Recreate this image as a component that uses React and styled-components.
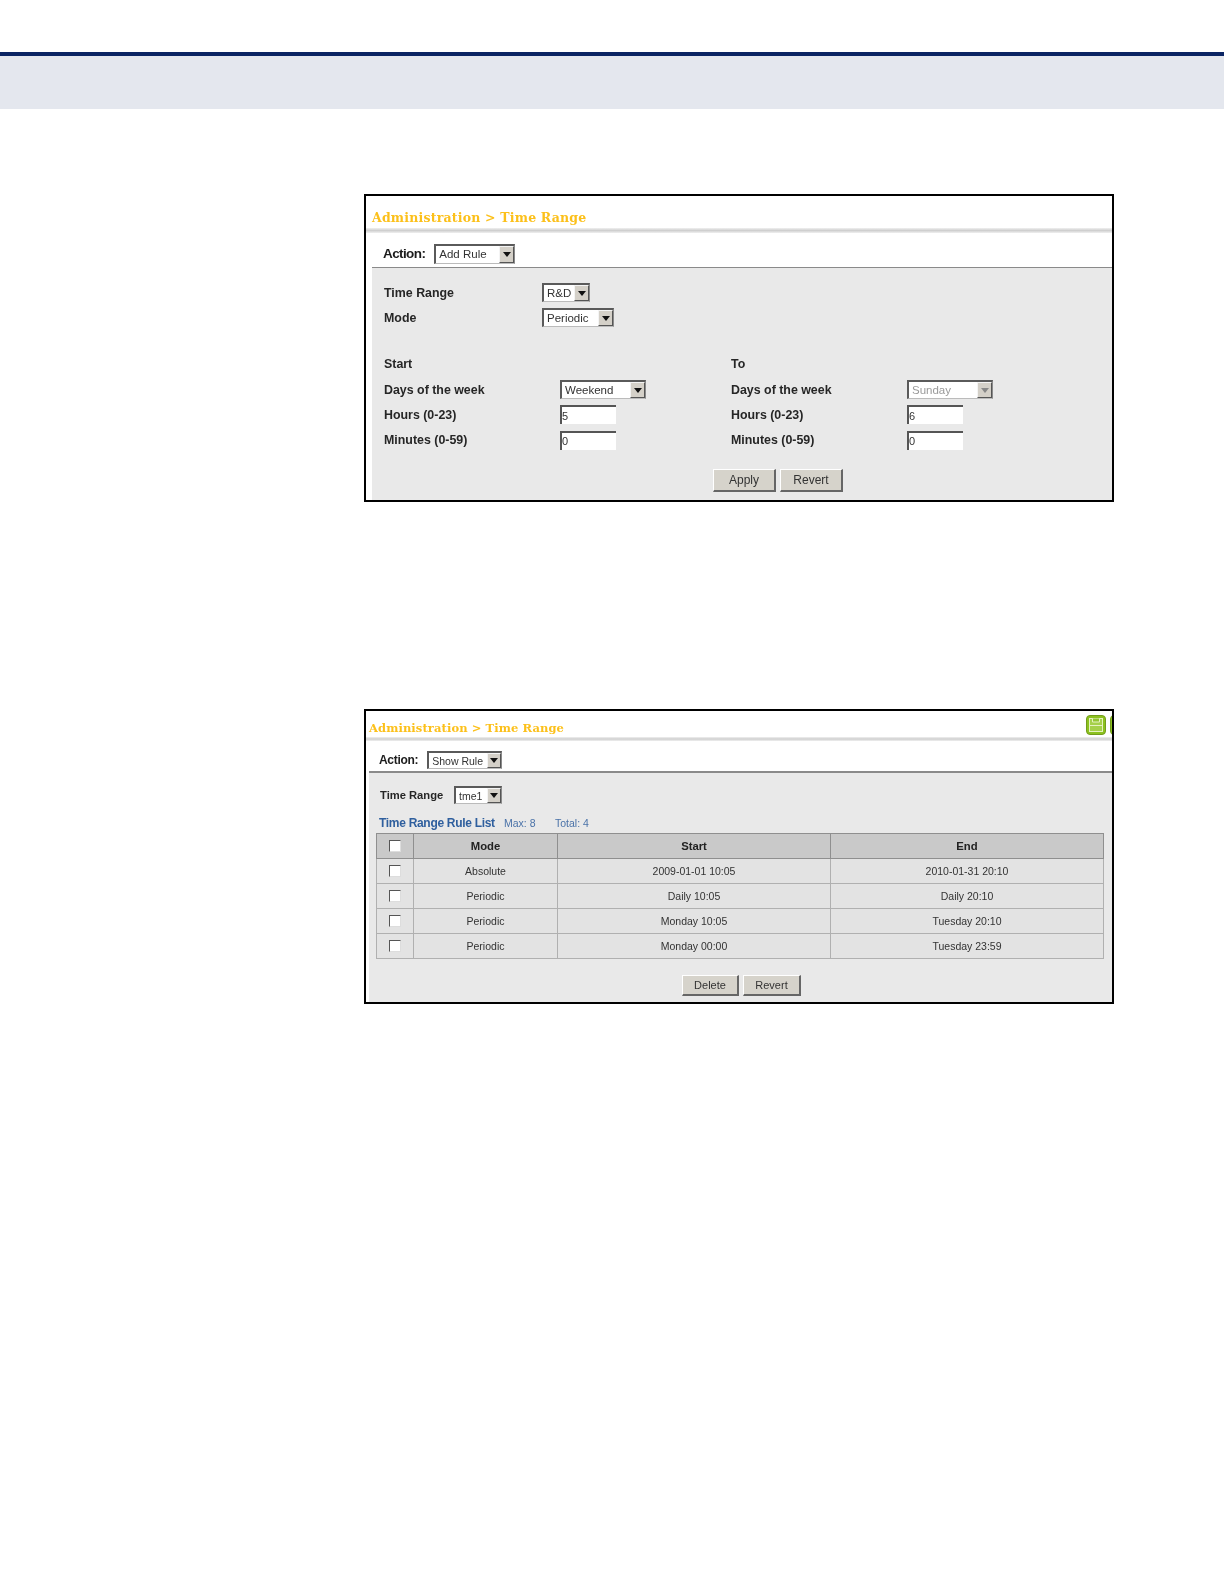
import React from 'react';
import styled, { createGlobalStyle } from 'styled-components';

const GlobalStyle = createGlobalStyle`
  html, body {
    margin: 0;
    background: #fff;
    font-family: 'Liberation Sans', Arial, sans-serif;
  }
`;

const Page = styled.div`
  width: 1224px;
  height: 1584px;
  overflow: hidden;
`;

const ChapterBand = styled.div`
  margin-top: 52px;
  height: 53px;
  border-top: 4px solid #0a2463;
  background: #e4e7ee;
`;

const Figure = styled.div`
  box-sizing: border-box;
  width: 750px;
  margin-left: 364px;
  margin-top: ${p => p.$top}px;
  height: ${p => p.$height}px;
  border: 2px solid #000;
  background: #fff;
`;

const Screen = styled.div`
  height: 100%;
  display: flex;
  flex-direction: column;
  filter: blur(0.35px);
`;

const TitleBar = styled.div`
  box-sizing: border-box;
  display: flex;
  align-items: flex-end;
  justify-content: space-between;
  height: ${p => p.$height}px;
  padding-left: ${p => p.$inset}px;
  padding-bottom: ${p => p.$bottom}px;
  overflow: hidden;
`;

const Title = styled.div`
  font-family: 'DejaVu Serif', serif;
  font-weight: bold;
  font-size: ${p => p.$size}px;
  line-height: 14px;
  letter-spacing: ${p => p.$spacing}px;
  color: #fcc01a;
`;

const TitleRule = styled.div`
  height: ${p => p.$height}px;
  background: linear-gradient(#f0f0f0, #cfcfcf 50%, #f0f0f0);
`;

const ActionRow = styled.div`
  box-sizing: border-box;
  display: flex;
  align-items: center;
  height: ${p => p.$height}px;
  margin-left: ${p => p.$inset}px;
  padding-left: ${p => p.$pad}px;
  padding-top: ${p => p.$top}px;
  gap: ${p => p.$gap}px;
  border-bottom: ${p => p.$rule}px solid #8a8a8a;
`;

const ActionLabel = styled.span`
  font-size: ${p => p.$size}px;
  font-weight: bold;
  color: #1c1c1c;
  letter-spacing: ${p => p.$spacing}px;
`;

const Body = styled.div`
  flex: 1;
  min-height: 0;
  margin-left: ${p => p.$inset}px;
  padding-top: 12px;
  background: #e9e9e9;
`;

const FormBlock = styled.div`
  padding-left: 12px;
`;

const FormRow = styled.div`
  display: flex;
  align-items: center;
  height: ${p => p.$height || 25.3}px;
  padding-left: ${p => p.$pad || 0}px;
`;

const FieldLabel = styled.div`
  width: ${p => p.$width}px;
  font-size: ${p => p.$size || 12.4}px;
  font-weight: bold;
  color: #262626;
`;

const Columns = styled.div`
  display: grid;
  grid-template-columns: 347px 1fr;
  margin-top: 21px;
`;

const SelectBox = styled.div`
  box-sizing: border-box;
  display: flex;
  align-items: center;
  justify-content: space-between;
  width: ${p => p.$width}px;
  height: ${p => p.$height || 19}px;
  padding-left: 3px;
  background: #fff;
  border-style: solid;
  border-width: 2px 1px 1px 2px;
  border-color: #5a5a5a #8a8a8a #bbb #5a5a5a;
  font-size: ${p => p.$size || 11.5}px;
  color: ${p => (p.$disabled ? '#9a9a9a' : '#333')};
`;

const SelectArrow = styled.span`
  box-sizing: border-box;
  display: flex;
  align-items: center;
  justify-content: center;
  width: ${p => p.$size}px;
  height: 100%;
  background: #d4d0c8;
  border-style: solid;
  border-width: 1px;
  border-color: #f4f4f4 #555 #555 #f4f4f4;

  &::after {
    content: '';
    border-style: solid;
    border-width: 5px 4.5px 0;
    border-color: ${p => (p.$disabled ? '#888' : '#111')} transparent transparent;
  }
`;

const TextBox = styled.input`
  box-sizing: border-box;
  display: block;
  width: 56px;
  height: 19px;
  padding: 0;
  background: #fff;
  border-style: solid;
  border-width: 2px 0 0 2px;
  border-color: #555;
  outline: none;
  font-family: inherit;
  font-size: 11px;
  color: #333;
`;

const Buttons = styled.div`
  display: flex;
  gap: 4px;
  margin-top: ${p => p.$top}px;
  padding-left: ${p => p.$pad}px;
`;

const Button = styled.button`
  box-sizing: border-box;
  width: ${p => p.$width}px;
  height: ${p => p.$height}px;
  padding: 0;
  background: #d6d3cb;
  border-style: solid;
  border-width: 1px 2px 2px 1px;
  border-color: #fff #666 #666 #fff;
  font-family: inherit;
  font-size: ${p => p.$size}px;
  color: #333;
`;

const ListTitle = styled.div`
  display: flex;
  align-items: center;
  height: 20px;
  margin-top: 8px;
  padding-left: 10px;
  color: #2f5f9e;
`;

const ListName = styled.span`
  width: 125px;
  font-size: 12px;
  font-weight: bold;
  letter-spacing: -0.3px;
`;

const ListCount = styled.span`
  width: ${p => p.$width}px;
  font-size: 10.5px;
  color: #4a72a8;
`;

const RuleTable = styled.table`
  table-layout: fixed;
  width: 727px;
  margin: 0 0 0 7px;
  border-collapse: collapse;
  font-size: 10.5px;
`;

const HeadCell = styled.th`
  box-sizing: border-box;
  height: 25px;
  padding: 0;
  background: #c9c9c9;
  border: 1px solid #8f8f8f;
  font-size: 11.3px;
  font-weight: bold;
  color: #222;
`;

const Cell = styled.td`
  box-sizing: border-box;
  height: 25px;
  padding: 0;
  text-align: center;
  background: #e3e3e3;
  border: 1px solid #b0b0b0;
  color: #333;
`;

const Tick = styled.input.attrs({ type: 'checkbox' })`
  appearance: none;
  display: block;
  box-sizing: border-box;
  width: 12px;
  height: 12px;
  margin: 0 auto;
  background: #fff;
  border-style: solid;
  border-width: 1px;
  border-color: #555 #ddd #ddd #555;
`;

const IconGroup = styled.div`
  display: flex;
  gap: 4px;
  margin-right: -18px;
`;

const SaveIcon = () => (
  <svg width="20" height="20" viewBox="0 0 20 20">
    <rect x="0.5" y="0.5" width="19" height="19" rx="3.5" fill="#8cc21f" stroke="#739c1c" />
    <rect x="3.5" y="3.5" width="13" height="13" fill="#a6d04a" stroke="#e6f2c0" />
    <path d="M6.5 3.5v3.5h7v-3.5" fill="#93c533" stroke="#e6f2c0" />
    <path d="M3.5 10.5h13" stroke="#e6f2c0" />
  </svg>
);

const Select = ({ value, width, arrow = 15, ...rest }) => (
  <SelectBox $width={width} {...rest}>
    {value}
    <SelectArrow $size={arrow} $disabled={rest.$disabled} />
  </SelectBox>
);

const Field = ({ label, width = 176, children }) => (
  <FormRow>
    <FieldLabel $width={width}>{label}</FieldLabel>
    {children}
  </FormRow>
);

const rules = [
  ['Absolute', '2009-01-01 10:05', '2010-01-31 20:10'],
  ['Periodic', 'Daily 10:05', 'Daily 20:10'],
  ['Periodic', 'Monday 10:05', 'Tuesday 20:10'],
  ['Periodic', 'Monday 00:00', 'Tuesday 23:59'],
];

const AddRule = () => (
  <Figure $top={85} $height={308}>
    <Screen>
      <TitleBar $height={32} $inset={6} $bottom={3}>
        <Title $size={12.5} $spacing={0.2}>Administration &gt; Time Range</Title>
      </TitleBar>
      <TitleRule $height={5} />
      <ActionRow $height={35} $inset={6} $pad={11} $gap={9} $rule={1} $top={7}>
        <ActionLabel $size={13.5} $spacing={-0.6}>Action:</ActionLabel>
        <Select value="Add Rule" width={81} $height={20} />
      </ActionRow>
      <Body $inset={6}>
        <FormBlock>
          <Field label="Time Range" width={158}><Select value="R&D" width={48} /></Field>
          <Field label="Mode" width={158}><Select value="Periodic" width={72} /></Field>
          <Columns>
            <div>
              <Field label="Start" />
              <Field label="Days of the week"><Select value="Weekend" width={86} /></Field>
              <Field label="Hours (0-23)"><TextBox defaultValue="5" /></Field>
              <Field label="Minutes (0-59)"><TextBox defaultValue="0" /></Field>
            </div>
            <div>
              <Field label="To" />
              <Field label="Days of the week"><Select value="Sunday" width={86} $disabled /></Field>
              <Field label="Hours (0-23)"><TextBox defaultValue="6" /></Field>
              <Field label="Minutes (0-59)"><TextBox defaultValue="0" /></Field>
            </div>
          </Columns>
        </FormBlock>
        <Buttons $top={16} $pad={341}>
          <Button $width={63} $height={23} $size={12}>Apply</Button>
          <Button $width={63} $height={23} $size={12}>Revert</Button>
        </Buttons>
      </Body>
    </Screen>
  </Figure>
);

const ShowRule = () => (
  <Figure $top={207} $height={295}>
    <Screen>
      <TitleBar $height={26} $inset={3} $bottom={2}>
        <Title $size={11.5} $spacing={0.1}>Administration &gt; Time Range</Title>
        <IconGroup>
          <SaveIcon />
          <SaveIcon />
        </IconGroup>
      </TitleBar>
      <TitleRule $height={4} />
      <ActionRow $height={32} $inset={3} $pad={10} $gap={9} $rule={2} $top={8}>
        <ActionLabel $size={12} $spacing={-0.3}>Action:</ActionLabel>
        <Select value="Show Rule" width={75} arrow={14} $height={18} $size={10.5} />
      </ActionRow>
      <Body $inset={3}>
        <FormRow $pad={11} $height={20}>
          <FieldLabel $width={74} $size={11.2}>Time Range</FieldLabel>
          <Select value="tme1" width={48} arrow={14} $height={18} $size={10.5} />
        </FormRow>
        <ListTitle>
          <ListName>Time Range Rule List</ListName>
          <ListCount $width={51}>Max: 8</ListCount>
          <ListCount $width={50}>Total: 4</ListCount>
        </ListTitle>
        <RuleTable>
          <colgroup>
            <col width="37" />
            <col width="144" />
            <col width="273" />
            <col width="273" />
          </colgroup>
          <thead>
            <tr>
              <HeadCell><Tick /></HeadCell>
              <HeadCell>Mode</HeadCell>
              <HeadCell>Start</HeadCell>
              <HeadCell>End</HeadCell>
            </tr>
          </thead>
          <tbody>
            {rules.map((r, i) => (
              <tr key={i}>
                <Cell><Tick /></Cell>
                <Cell>{r[0]}</Cell>
                <Cell>{r[1]}</Cell>
                <Cell>{r[2]}</Cell>
              </tr>
            ))}
          </tbody>
        </RuleTable>
        <Buttons $top={16} $pad={313}>
          <Button $width={57} $height={21} $size={11}>Delete</Button>
          <Button $width={58} $height={21} $size={11}>Revert</Button>
        </Buttons>
      </Body>
    </Screen>
  </Figure>
);

const App = () => (
  <Page>
    <GlobalStyle />
    <ChapterBand />
    <AddRule />
    <ShowRule />
  </Page>
);

export default App;
